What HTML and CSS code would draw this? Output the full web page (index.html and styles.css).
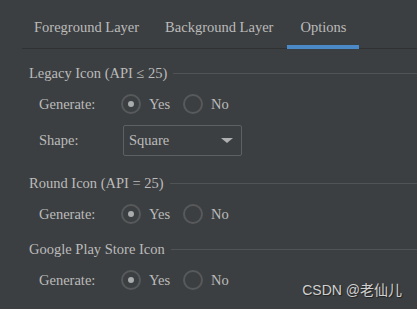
FILE: index.html
```html
<!DOCTYPE html>
<html>
<head>
<meta charset="utf-8">
<link rel="stylesheet" href="styles.css">
</head>
<body>
<div class="page">
  <div class="tabs">
    <div class="tab">Foreground Layer</div>
    <div class="tab">Background Layer</div>
    <div class="tab active">Options</div>
  </div>
  <div class="content">
    <div class="section">
      <div class="sec-head"><span>Legacy Icon (API ≤ 25)</span><div class="rule"></div></div>
      <div class="row">
        <div class="label">Generate:</div>
        <div class="radios">
          <span class="radio on"></span><span class="rtext">Yes</span>
          <span class="radio"></span><span class="rtext">No</span>
        </div>
      </div>
      <div class="row shape-row">
        <div class="label">Shape:</div>
        <div class="combo"><span>Square</span><span class="arrow"></span></div>
      </div>
    </div>
    <div class="section sec-round">
      <div class="sec-head"><span>Round Icon (API = 25)</span><div class="rule"></div></div>
      <div class="row">
        <div class="label">Generate:</div>
        <div class="radios">
          <span class="radio on"></span><span class="rtext">Yes</span>
          <span class="radio"></span><span class="rtext">No</span>
        </div>
      </div>
    </div>
    <div class="section sec-play">
      <div class="sec-head"><span>Google Play Store Icon</span><div class="rule"></div></div>
      <div class="row">
        <div class="label">Generate:</div>
        <div class="radios">
          <span class="radio on"></span><span class="rtext">Yes</span>
          <span class="radio"></span><span class="rtext">No</span>
        </div>
      </div>
    </div>
  </div>
  <div class="watermark">CSDN @老仙儿</div>
</div>
</body>
</html>
```
FILE: styles.css
```css
html, body {
  margin: 0;
  padding: 0;
  background: #3c3f41;
}
.page {
  position: relative;
  width: 417px;
  height: 309px;
  overflow: hidden;
  font-family: "Liberation Serif", "Times New Roman", serif;
  font-size: 14.5px;
  color: #bbbbbb;
}
.tabs {
  display: flex;
  height: 48px;
  margin-left: 22px;
  border-bottom: 1px solid #2f3133;
}
.tab {
  padding: 19px 12px 0 12px;
  margin-right: 2px;
  box-sizing: border-box;
  height: 48px;
  white-space: nowrap;
}
.tab.active {
  border-bottom: 4px solid #4a88c7;
  height: 49px;
  margin-bottom: -1px;
  padding-left: 13px;
  padding-right: 13px;
}
.content {
  padding-left: 29px;
  padding-top: 15px;
}
.section {
  display: flex;
  flex-direction: column;
}
.sec-head {
  display: flex;
  align-items: center;
  height: 18px;
  white-space: nowrap;
}
.rule {
  flex: 1;
  height: 1px;
  background: #515456;
  margin-left: 6px;
}
.row {
  display: flex;
  align-items: center;
  height: 34px;
  padding-left: 10px;
  margin-top: 5px;
}
.label {
  width: 82px;
}
.radios {
  display: flex;
  align-items: center;
}
.radio {
  width: 16px;
  height: 16px;
  border: 2px solid #57595b;
  border-radius: 50%;
  box-sizing: content-box;
  position: relative;
  margin-right: 8px;
  background: #3c3f41;
}
.radio.on::after {
  content: "";
  position: absolute;
  left: 5px;
  top: 5px;
  width: 6px;
  height: 6px;
  border-radius: 50%;
  background: #a9abad;
}
.rtext {
  margin-right: 13px;
}
.shape-row {
  margin-top: 1px;
  height: 36px;
}
.combo {
  height: 29px;
  border: 1px solid #5e6163;
  border-radius: 2px;
  display: flex;
  align-items: center;
  justify-content: space-between;
  padding: 0 8px 0 5px;
  box-sizing: content-box;
  margin-left: 2px;
  width: 104px;
}
.arrow {
  width: 0;
  height: 0;
  border-left: 6px solid transparent;
  border-right: 6px solid transparent;
  border-top: 5px solid #aeb0b2;
}
.sec-round {
  margin-top: 16px;
}
.sec-play {
  margin-top: 9px;
}
.watermark {
  position: absolute;
  right: 15px;
  bottom: 10px;
  font-family: "Liberation Sans", "Noto Sans CJK SC", sans-serif;
  font-size: 14px;
  color: #d0d0d0;
  text-shadow: 1px 1px 1px #222;
}
```
